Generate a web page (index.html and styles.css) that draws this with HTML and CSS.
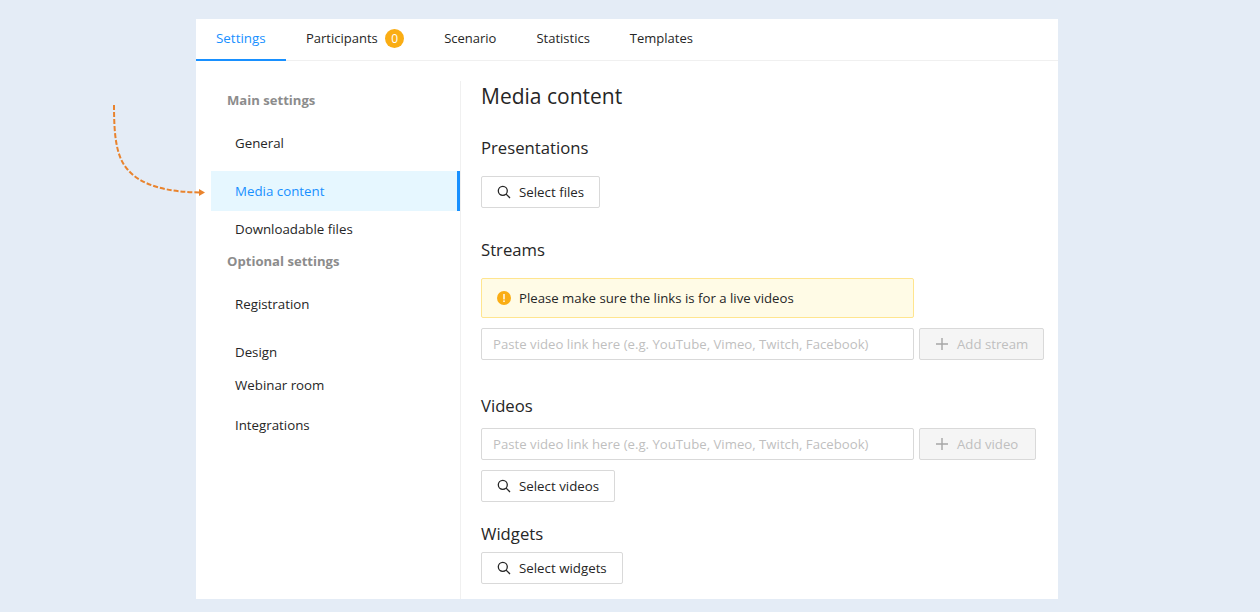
FILE: index.html
```html
<!DOCTYPE html>
<html lang="en">
<head>
<meta charset="utf-8">
<title>Media content</title>
<link rel="stylesheet" href="styles.css">
</head>
<body>
<svg class="arrow" width="100" height="95" viewBox="0 0 100 95" fill="none">
  <path class="arrow-line" d="M4 0 C4 30 6 52 18 65 C32 81 58 87 90 87.5"/>
  <path class="arrow-head" d="M89 84 L95 87.5 L89 91 Z"/>
</svg>
<div class="card">
  <nav class="tabs">
    <a class="tab tab-active">Settings</a>
    <a class="tab">Participants <span class="badge">0</span></a>
    <a class="tab">Scenario</a>
    <a class="tab">Statistics</a>
    <a class="tab">Templates</a>
  </nav>
  <div class="body">
    <aside class="side">
      <div class="side-title side-title-main">Main settings</div>
      <a class="item item-general">General</a>
      <a class="item item-active">Media content</a>
      <a class="item item-files">Downloadable files</a>
      <div class="side-title side-title-opt">Optional settings</div>
      <a class="item item-reg">Registration</a>
      <a class="item item-design">Design</a>
      <a class="item item-room">Webinar room</a>
      <a class="item item-int">Integrations</a>
    </aside>
    <main class="main">
      <h1 class="title">Media content</h1>
      <h2 class="sub sub-pres">Presentations</h2>
      <button class="btn">
        <svg class="ico" viewBox="0 0 14 14" width="14" height="14" fill="none"><circle cx="5.8" cy="5.8" r="4.5"/><path d="M9.1 9.1 L13 13"/></svg>
        Select files
      </button>
      <h2 class="sub sub-streams">Streams</h2>
      <div class="alert">
        <svg class="alert-ico" viewBox="0 0 14 14" width="14" height="14"><circle cx="7" cy="7" r="7" fill="#faad14"/><rect x="6.3" y="3" width="1.4" height="5.4" fill="#fff"/><rect x="6.3" y="9.4" width="1.4" height="1.6" fill="#fff"/></svg>
        Please make sure the links is for a live videos
      </div>
      <div class="row">
        <input class="input" type="text" placeholder="Paste video link here (e.g. YouTube, Vimeo, Twitch, Facebook)">
        <button class="btn btn-off btn-stream">
          <svg class="ico-plus" viewBox="0 0 12 12" width="12" height="12"><path d="M6 0 V12 M0 6 H12"/></svg>
          Add stream
        </button>
      </div>
      <h2 class="sub sub-videos">Videos</h2>
      <div class="row">
        <input class="input" type="text" placeholder="Paste video link here (e.g. YouTube, Vimeo, Twitch, Facebook)">
        <button class="btn btn-off btn-video">
          <svg class="ico-plus" viewBox="0 0 12 12" width="12" height="12"><path d="M6 0 V12 M0 6 H12"/></svg>
          Add video
        </button>
      </div>
      <button class="btn btn-videos">
        <svg class="ico" viewBox="0 0 14 14" width="14" height="14" fill="none"><circle cx="5.8" cy="5.8" r="4.5"/><path d="M9.1 9.1 L13 13"/></svg>
        Select videos
      </button>
      <h2 class="sub sub-widgets">Widgets</h2>
      <button class="btn">
        <svg class="ico" viewBox="0 0 14 14" width="14" height="14" fill="none"><circle cx="5.8" cy="5.8" r="4.5"/><path d="M9.1 9.1 L13 13"/></svg>
        Select widgets
      </button>
    </main>
  </div>
</div>
</body>
</html>
```
FILE: styles.css
```css
* { box-sizing: border-box; }
html, body { height: 100%; }
body {
  margin: 0;
  padding: 19px 202px 13px 196px;
  background: #e4ecf6;
  font-family: "Open Sans", "Noto Sans", sans-serif;
  font-size: 13.2px;
  color: #262626;
  overflow: hidden;
}
.arrow { position: absolute; left: 110px; top: 105px; }
.arrow-line { stroke: #e9832d; stroke-width: 2; stroke-dasharray: 5 2; }
.arrow-head { fill: #e9832d; }
.card { background: #fff; height: 580px; display: flex; flex-direction: column; }
.tabs { display: flex; height: 42px; border-bottom: 1px solid #f0f0f0; font-size: 13px; }
.tab { display: flex; align-items: center; padding: 0 20px 4px; height: 42px; white-space: pre; }
.tab-active { width: 90px; font-size: 13.4px; color: #1890ff; border-bottom: 2px solid #1890ff; padding-bottom: 2px; }
.badge {
  display: inline-block; width: 19px; height: 19px; margin-left: 4px;
  border-radius: 50%; background: #faad14; color: #fff;
  font-size: 12px; line-height: 19px; text-align: center;
}
.body { display: flex; flex: 1; padding-top: 20px; }
.side { width: 265px; padding-left: 15px; border-right: 1px solid #f0f0f0; font-size: 13.3px; }
.side-title { font-size: 13.1px; font-weight: 700; color: #8c8c8c; padding-left: 16px; display: flex; align-items: center; }
.side-title-main { height: 38px; }
.side-title-opt { height: 28px; }
.item { display: flex; align-items: center; height: 40px; padding-left: 24px; }
.item-general { margin-top: 4px; margin-bottom: 8px; }
.item-active { background: #e6f7ff; color: #1890ff; border-right: 3px solid #1890ff; }
.item-files { height: 36px; }
.item-reg { margin-top: 9px; }
.item-design { margin-top: 8px; }
.item-room { height: 26px; }
.item-int { margin-top: 7px; }
.main { flex: 1; padding-left: 20px; min-width: 0; }
.title { margin: 0; height: 30px; line-height: 30px; font-size: 21px; font-weight: 400; }
.sub { margin: 0; font-size: 16.7px; font-weight: 400; height: 26px; line-height: 26px; }
.sub-pres { margin-top: 24px; margin-bottom: 15px; }
.sub-streams { margin-top: 29px; margin-bottom: 15px; }
.sub-videos { margin-top: 33px; margin-bottom: 9px; }
.sub-widgets { margin-top: 19px; margin-bottom: 5px; }
.btn {
  display: flex; align-items: center; height: 32px; padding: 0 15px;
  background: #fff; border: 1px solid #d9d9d9; border-radius: 2px;
  font: inherit; font-size: 13.3px; color: #262626; white-space: nowrap;
}
.ico { margin-right: 8px; stroke: #262626; stroke-width: 1.3; }
.btn-off { background: #f5f5f5; color: #bfbfbf; padding: 0 0 0 16px; font-size: 13.2px; }
.btn-stream { width: 125px; }
.btn-video { width: 117px; }
.btn-videos { margin-top: 10px; }
.ico-plus { margin-right: 9px; stroke: #a6a6a6; stroke-width: 1.4; fill: none; }
.alert {
  display: flex; align-items: center; width: 433px; height: 40px; padding-left: 15px;
  background: #fffbe6; border: 1px solid #ffe58f; border-radius: 2px;
}
.alert-ico { margin-right: 8px; }
.row { display: flex; gap: 5px; }
.alert + .row { margin-top: 10px; }
.input {
  width: 433px; height: 32px; padding: 0 11px;
  border: 1px solid #d9d9d9; border-radius: 2px;
  font: inherit; color: #262626; background: #fff; outline: 0;
}
.input::placeholder { color: #bfbfbf; opacity: 1; }
```
